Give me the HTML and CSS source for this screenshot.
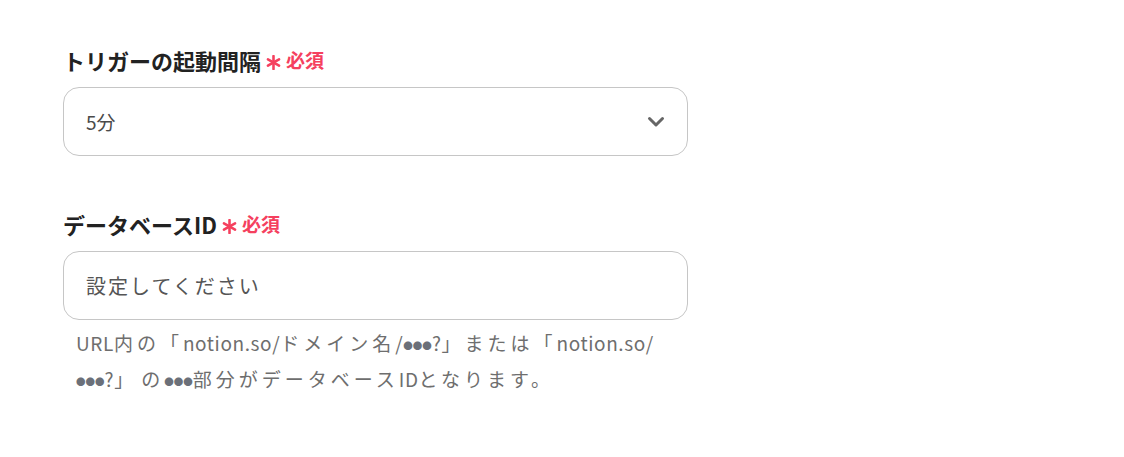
FILE: index.html
```html
<!DOCTYPE html>
<html lang="ja">
<head>
<meta charset="utf-8">
<link rel="stylesheet" href="styles.css">
</head>
<body>
<main class="form">
  <div class="field">
    <div class="label">
      <span class="label-text">トリガーの起動間隔</span>
      <svg class="req-mark" viewBox="0 0 14 14" width="15" height="15"><g stroke="#f5405e" stroke-width="2.4" stroke-linecap="round"><line x1="7" y1="1" x2="7" y2="13"/><line x1="1.8" y1="4" x2="12.2" y2="10"/><line x1="1.8" y1="10" x2="12.2" y2="4"/></g></svg>
      <span class="req">必須</span>
    </div>
    <div class="control select">
      <span class="value">5分</span>
      <svg class="chevron" viewBox="0 0 18 12" width="18" height="12"><path d="M2.5 2.5 L9 9 L15.5 2.5" fill="none" stroke="#666" stroke-width="3" stroke-linecap="round" stroke-linejoin="round"/></svg>
    </div>
  </div>
  <div class="field">
    <div class="label">
      <span class="label-text">データベースID</span>
      <svg class="req-mark" viewBox="0 0 14 14" width="15" height="15"><g stroke="#f5405e" stroke-width="2.4" stroke-linecap="round"><line x1="7" y1="1" x2="7" y2="13"/><line x1="1.8" y1="4" x2="12.2" y2="10"/><line x1="1.8" y1="10" x2="12.2" y2="4"/></g></svg>
      <span class="req">必須</span>
    </div>
    <div class="control input">
      <span class="placeholder">設定してください</span>
    </div>
    <p class="help"><span class="latin">URL</span>内の「<span class="latin">notion.so/</span>ドメイン名<span class="latin">/</span><span class="dots">●●●</span><span class="latin">?</span>」または「<span class="latin">notion.so/</span><br><span class="dots">●●●</span><span class="latin">?</span><span class="close">」</span>の<span class="dots">●●●</span>部分がデータベース<span class="latin">ID</span>となります。</p>
  </div>
</main>
</body>
</html>
```

FILE: styles.css
```css
html, body {
  margin: 0;
  padding: 0;
  background: #ffffff;
}

body {
  font-family: "Noto Sans CJK JP", "Noto Sans", sans-serif;
  color: #222222;
}

.form {
  padding: 46px 0 0 63px;
  width: 625px;
}

.field + .field {
  margin-top: 54px;
}

.label {
  display: flex;
  align-items: center;
  height: 28px;
  margin-bottom: 13px;
}

.label-text {
  font-size: 22px;
  font-weight: 700;
  color: #222222;
  line-height: 28px;
}

.req-mark {
  margin-left: 5px;
  margin-top: 5px;
  flex: none;
}

.req {
  margin-left: 5px;
  font-size: 19px;
  font-weight: 700;
  color: #f5405e;
  line-height: 28px;
}

.control {
  box-sizing: border-box;
  height: 69px;
  border: 1px solid #c6c6c6;
  border-radius: 16px;
  display: flex;
  align-items: center;
  padding: 0 22px 0 22px;
  background: #fff;
}

.select {
  justify-content: space-between;
}

.value {
  font-size: 19px;
  color: #4a4a4a;
}

.placeholder {
  font-size: 20px;
  letter-spacing: 2px;
  color: #555555;
}

.chevron {
  margin-right: 0;
}

.help {
  margin: 6px 0 0 0;
  padding-left: 13px;
  font-size: 19px;
  letter-spacing: 4px;
  line-height: 34px;
  color: #6e6e6e;
  white-space: nowrap;
}

.latin {
  letter-spacing: 0.6px;
}

.close {
  letter-spacing: 8px;
}

.dots {
  font-size: 9.5px;
  letter-spacing: 0;
  color: #6b7079;
  vertical-align: 2px;
}
```
